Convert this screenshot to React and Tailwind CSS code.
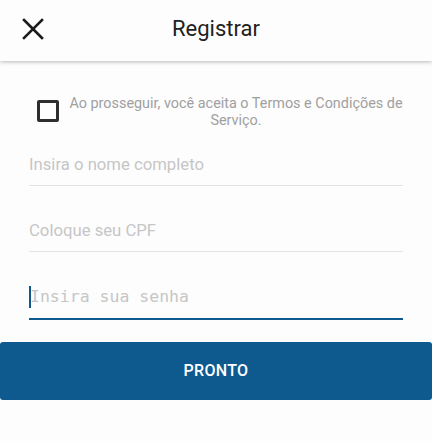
import React from "react";

export default function App() {
  return (
    <div className="w-[432px] h-[441px] bg-[#fdfdfd] font-['Roboto',sans-serif] overflow-hidden">
      <header className="relative z-10 h-[61px] bg-[#fdfdfd] shadow-[0_1px_4px_rgba(0,0,0,0.28)] grid grid-cols-[64px_1fr_64px] items-center">
        <div className="pl-[22px] pb-[4px] flex items-center">
          <svg width="22" height="22" viewBox="0 0 22 22" fill="none">
            <path d="M2 2L20 20M20 2L2 20" stroke="#1a1a1a" strokeWidth="2.6" strokeLinecap="square" />
          </svg>
        </div>
        <h1 className="text-center text-[22px] leading-[24px] text-[#212121] pb-[4px]">Registrar</h1>
        <div />
      </header>

      <div className="flex items-start pl-[37px] mt-[35px]">
        <div className="mt-[4px] w-[22px] h-[22px] shrink-0 border-[3px] border-[#2e2e2e] rounded-[2px]" />
        <p className="ml-[7px] w-[340px] text-center text-[14.4px] leading-[16.5px] text-[#a0a0a0]">
          Ao prosseguir, você aceita o Termos e Condições de Serviço.
        </p>
      </div>

      <div className="px-[29px]">
        <div className="mt-[26px] pb-[10px] border-b border-[#e3e3e3]">
          <div className="text-[16.7px] leading-[20px] text-[#c6c6c6]">Insira o nome completo</div>
        </div>
        <div className="mt-[35px] pb-[10px] border-b border-[#e3e3e3]">
          <div className="text-[16.7px] leading-[20px] text-[#c6c6c6]">Coloque seu CPF</div>
        </div>
        <div className="mt-[34px] pb-[10px] border-b-2 border-[#0e5a8f]">
          <div className="relative font-['DejaVu_Sans_Mono',monospace] text-[16.5px] leading-[22px] text-[#c6c6c6] pl-[1px]">
            <span className="absolute left-0 top-0 w-[2px] h-[22px] bg-[#0e5a8f]" />
            Insira sua senha
          </div>
        </div>
      </div>

      <button className="mt-[22px] w-full h-[58px] bg-[#0e5a8f] rounded-[3px] text-white text-[16px] font-medium tracking-[0.3px] flex items-center justify-center">
        PRONTO
      </button>
    </div>
  );
}
